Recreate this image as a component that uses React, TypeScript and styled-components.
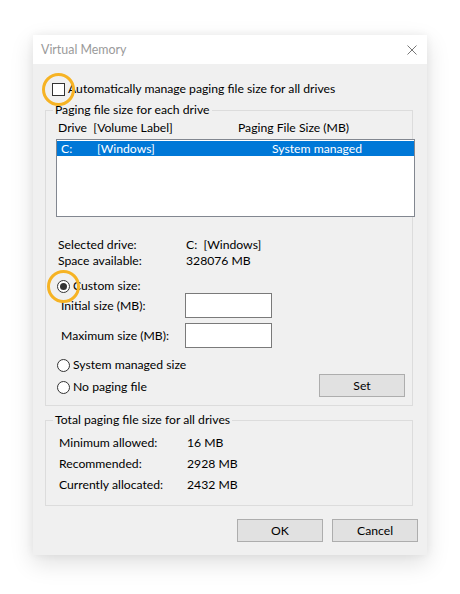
import React from "react";
import styled, { createGlobalStyle } from "styled-components";

const Global = createGlobalStyle`
  html, body { margin: 0; padding: 0; background: #ffffff; }
  body { font-family: Lato, "Noto Sans", sans-serif; font-size: 12.2px; color: #000; }
  * { box-sizing: border-box; }
`;

const Page = styled.div`
  padding: 35px 0 0 33px;
  width: 460px;
  height: 594px;
`;

const Dialog = styled.div`
  width: 394px;
  height: 520px;
  background: #f0f0f0;
  box-shadow: 0 8px 22px rgba(0, 0, 0, 0.13), 0 0 8px rgba(0, 0, 0, 0.06);
  display: flex;
  flex-direction: column;
`;

const TitleBar = styled.div`
  height: 29px;
  background: #ffffff;
  display: flex;
  align-items: center;
  justify-content: space-between;
  padding: 0 10px 0 8px;
  flex-shrink: 0;
`;

const Title = styled.span`
  color: #9a9a9a;
  font-size: 12.4px;
  line-height: 16px;
`;

const Body = styled.div`
  padding: 0 9px 0 12px;
  display: flex;
  flex-direction: column;
`;

const CheckRow = styled.label`
  margin: 17px 0 0 7px;
  height: 16px;
  display: flex;
  align-items: center;
  gap: 3px;
  line-height: 16px;
`;

const Marked = styled.span`
  position: relative;
  display: inline-flex;
  flex-shrink: 0;
`;

const Highlight = styled.span`
  position: absolute;
  left: 50%;
  top: 50%;
  width: 33px;
  height: 33px;
  margin: -16.5px 0 0 -16.5px;
  border: 3px solid #f6b324;
  border-radius: 50%;
  pointer-events: none;
`;

const Checkbox = styled.span`
  width: 13px;
  height: 13px;
  border: 1px solid #333333;
  background: #ffffff;
  display: block;
`;

const Group = styled.fieldset<{ $mt: number; $pb: number }>`
  margin: ${(p) => p.$mt}px 5px 0 0;
  padding: 0 0 ${(p) => p.$pb}px 0;
  border: 1px solid #dcdcdc;
  min-width: 0;
`;

const Legend = styled.legend`
  padding: 0 2px;
  margin-left: 7px;
  line-height: 16px;
`;

const HeaderRow = styled.div`
  margin: 2px 0 0 12px;
  height: 16px;
  line-height: 16px;
  display: flex;
`;

const Cell = styled.span<{ $w?: number }>`
  ${(p) => (p.$w ? `width: ${p.$w}px; flex-shrink: 0;` : "")}
  white-space: nowrap;
`;

const ListBox = styled.div`
  margin: 3px 0 0 10px;
  width: 359px;
  height: 78px;
  border: 1px solid #828790;
  background: #ffffff;
  padding-top: 1px;
`;

const ListItem = styled.div<{ $selected?: boolean }>`
  height: 15px;
  line-height: 15px;
  padding-left: 4px;
  display: flex;
  background: ${(p) => (p.$selected ? "#0078d7" : "transparent")};
  color: ${(p) => (p.$selected ? "#ffffff" : "#000000")};
`;

const InfoBlock = styled.div<{ $mt: number; $pl: number; $h: number }>`
  margin-top: ${(p) => p.$mt}px;
  padding-left: ${(p) => p.$pl}px;
  display: flex;
  flex-direction: column;
  & > div {
    height: ${(p) => p.$h}px;
    line-height: ${(p) => p.$h}px;
    display: flex;
  }
`;

const RadioRow = styled.label`
  height: 16px;
  display: flex;
  align-items: center;
  gap: 3px;
  line-height: 16px;
`;

const Radio = styled.span<{ $checked?: boolean }>`
  width: 13px;
  height: 13px;
  border: 1px solid #333333;
  border-radius: 50%;
  background: #ffffff;
  display: flex;
  align-items: center;
  justify-content: center;
  &::after {
    content: "";
    width: 7px;
    height: 7px;
    border-radius: 50%;
    background: ${(p) => (p.$checked ? "#333333" : "transparent")};
  }
`;

const CustomBlock = styled.div`
  margin-top: 9px;
  padding-left: 11px;
  display: flex;
  flex-direction: column;
`;

const SizeRows = styled.div`
  margin-top: -1px;
  padding-left: 4px;
  display: flex;
  flex-direction: column;
  gap: 5px;
`;

const SizeRow = styled.div`
  display: flex;
  align-items: center;
  height: 25px;
`;

const SizeInput = styled.input`
  width: 87px;
  height: 25px;
  border: 1px solid #7a7a7a;
  background: #ffffff;
  margin: 0;
  padding: 0 3px;
  font: inherit;
  outline: none;
`;

const BottomArea = styled.div`
  margin-top: 9px;
  padding: 0 7px 0 11px;
  display: flex;
  justify-content: space-between;
  align-items: flex-end;
`;

const RadioColumn = styled.div`
  display: flex;
  flex-direction: column;
  gap: 6px;
  padding-bottom: 2px;
`;

const Button = styled.button`
  width: 86px;
  height: 23px;
  background: #e1e1e1;
  border: 1px solid #adadad;
  font: inherit;
  color: #000;
  padding: 0;
  margin: 0;
`;

const Footer = styled.div`
  margin-top: 13px;
  display: flex;
  justify-content: flex-end;
  gap: 9px;
`;

const CloseIcon = () => (
  <svg width="10" height="10" viewBox="0 0 10 10">
    <path d="M0.5 0.5 L9.5 9.5 M9.5 0.5 L0.5 9.5" stroke="#777" strokeWidth="1" fill="none" />
  </svg>
);

export default function App() {
  return (
    <>
      <Global />
      <Page>
        <Dialog>
          <TitleBar>
            <Title>Virtual Memory</Title>
            <CloseIcon />
          </TitleBar>
          <Body>
            <CheckRow>
              <Marked>
                <Checkbox />
                <Highlight />
              </Marked>
              <span>Automatically manage paging file size for all drives</span>
            </CheckRow>

            <Group $mt={5} $pb={8}>
              <Legend>Paging file size for each drive</Legend>
              <HeaderRow>
                <Cell $w={180}>Drive&nbsp;&nbsp;[Volume Label]</Cell>
                <Cell>Paging File Size (MB)</Cell>
              </HeaderRow>
              <ListBox>
                <ListItem $selected>
                  <Cell $w={36}>C:</Cell>
                  <Cell $w={175}>[Windows]</Cell>
                  <Cell>System managed</Cell>
                </ListItem>
              </ListBox>

              <InfoBlock $mt={20} $pl={12} $h={16}>
                <div>
                  <Cell $w={128}>Selected drive:</Cell>
                  <Cell>C:&nbsp;&nbsp;[Windows]</Cell>
                </div>
                <div>
                  <Cell $w={128}>Space available:</Cell>
                  <Cell>328076 MB</Cell>
                </div>
              </InfoBlock>

              <CustomBlock>
                <RadioRow>
                  <Marked>
                    <Radio $checked />
                    <Highlight />
                  </Marked>
                  <span>Custom size:</span>
                </RadioRow>
                <SizeRows>
                  <SizeRow>
                    <Cell $w={124}>Initial size (MB):</Cell>
                    <SizeInput />
                  </SizeRow>
                  <SizeRow>
                    <Cell $w={124}>Maximum size (MB):</Cell>
                    <SizeInput />
                  </SizeRow>
                </SizeRows>
              </CustomBlock>

              <BottomArea>
                <RadioColumn>
                  <RadioRow>
                    <Radio />
                    <span>System managed size</span>
                  </RadioRow>
                  <RadioRow>
                    <Radio />
                    <span>No paging file</span>
                  </RadioRow>
                </RadioColumn>
                <Button>Set</Button>
              </BottomArea>
            </Group>

            <Group $mt={6} $pb={10}>
              <Legend>Total paging file size for all drives</Legend>
              <InfoBlock $mt={4} $pl={13} $h={21}>
                <div>
                  <Cell $w={128}>Minimum allowed:</Cell>
                  <Cell>16 MB</Cell>
                </div>
                <div>
                  <Cell $w={128}>Recommended:</Cell>
                  <Cell>2928 MB</Cell>
                </div>
                <div>
                  <Cell $w={128}>Currently allocated:</Cell>
                  <Cell>2432 MB</Cell>
                </div>
              </InfoBlock>
            </Group>

            <Footer>
              <Button>OK</Button>
              <Button>Cancel</Button>
            </Footer>
          </Body>
        </Dialog>
      </Page>
    </>
  );
}
